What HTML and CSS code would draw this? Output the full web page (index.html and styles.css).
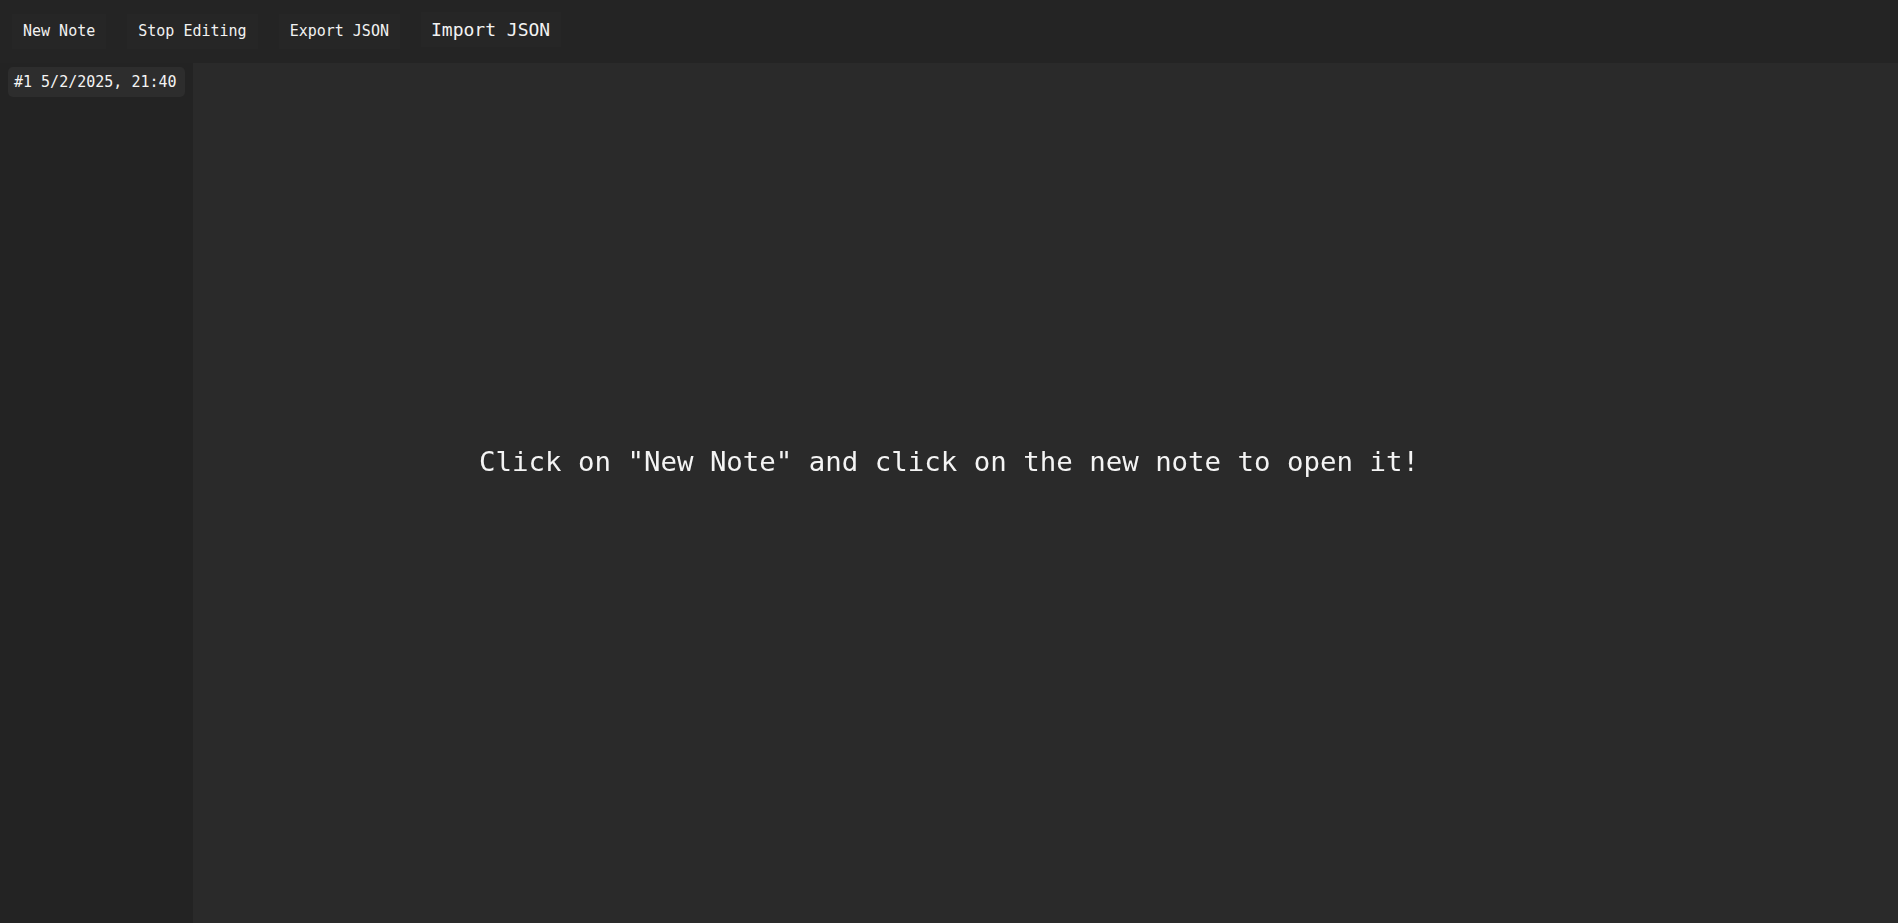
FILE: index.html
```html
<!DOCTYPE html>
<html>
<head>
<meta charset="utf-8">
<link rel="stylesheet" href="styles.css">
</head>
<body>
<div class="app">
  <header class="topbar">
    <button class="btn">New Note</button>
    <button class="btn">Stop Editing</button>
    <button class="btn">Export JSON</button>
    <label class="btn import">Import JSON</label>
  </header>
  <div class="main">
    <aside class="sidebar">
      <div class="note-item">#1 5/2/2025, 21:40</div>
    </aside>
    <section class="content"></section>
  </div>
  <div class="hint">Click on "New Note" and click on the new note to open it!</div>
</div>
</body>
</html>
```
FILE: styles.css
```css
html, body {
  margin: 0;
  padding: 0;
  height: 100%;
  background: #2a2a2a;
  font-family: "DejaVu Sans Mono", monospace;
  color: #f2f2f2;
}
.app {
  display: flex;
  flex-direction: column;
  height: 100vh;
}
.topbar {
  height: 63px;
  box-sizing: border-box;
  background: #242424;
  display: flex;
  align-items: baseline;
  gap: 21px;
  padding: 12px 12px 0 12px;
}
.btn {
  font-family: "DejaVu Sans Mono", monospace;
  font-size: 15px;
  line-height: 19px;
  color: #f2f2f2;
  background: #262626;
  border: none;
  padding: 8px 11px;
  margin: 0;
  border-radius: 0;
}
.import {
  font-size: 18px;
  line-height: 19px;
  padding: 8px 11px 8px 10px;
}
.main {
  flex: 1;
  display: flex;
}
.sidebar {
  width: 193px;
  background: #232323;
  padding: 4px 8px;
  box-sizing: border-box;
}
.note-item {
  background: #2d2d2d;
  border-radius: 5px;
  font-size: 15px;
  line-height: 18px;
  padding: 6px 6px;
  color: #f4f4f4;
  white-space: nowrap;
}
.content {
  flex: 1;
  background: #2a2a2a;
}
.hint {
  position: fixed;
  left: 0;
  right: 0;
  top: 0;
  bottom: 0;
  display: flex;
  align-items: center;
  justify-content: center;
  font-size: 27.4px;
  color: #f4f4f4;
  pointer-events: none;
}
```
